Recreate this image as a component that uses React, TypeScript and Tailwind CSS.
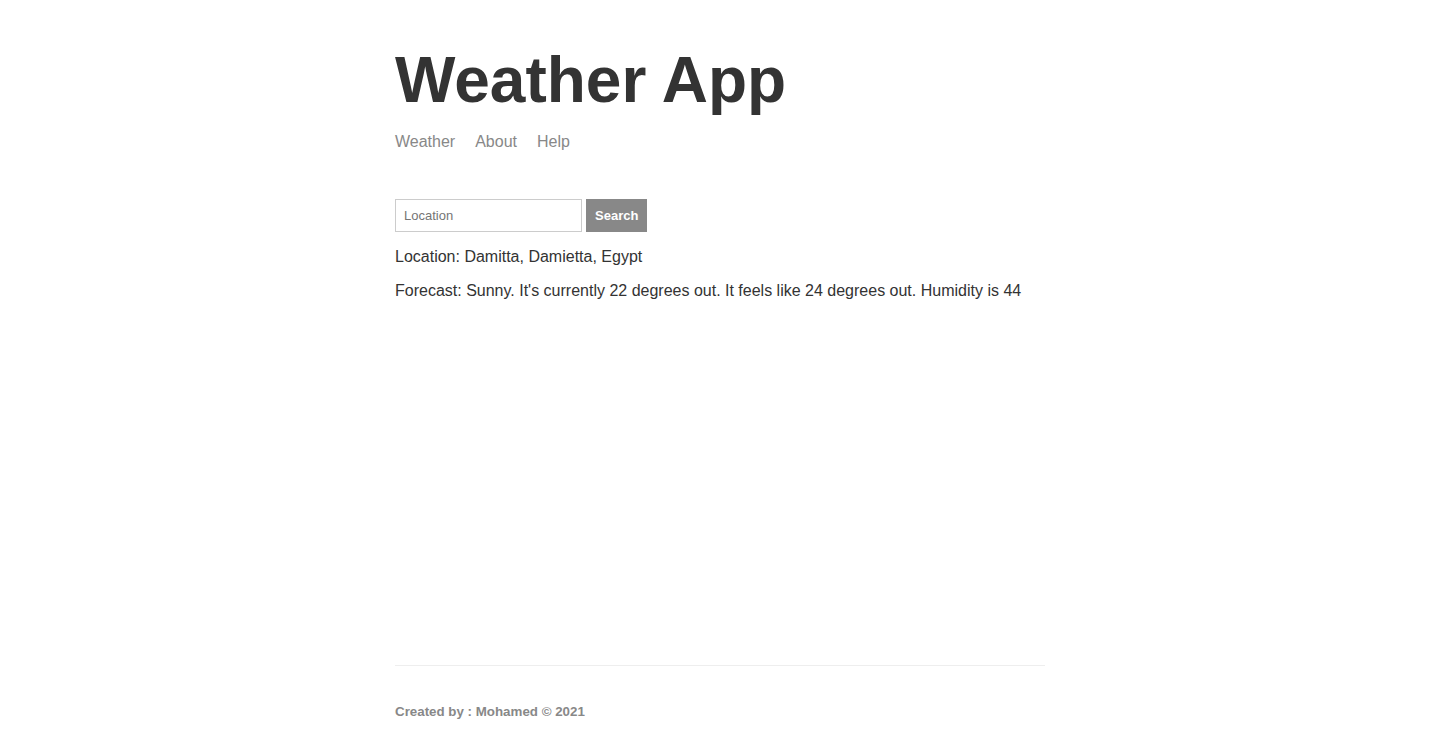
export default function App() {
  return (
    <div className="min-h-screen bg-white font-['Liberation_Sans',Arial,sans-serif] text-[#333]">
      <div className="mx-auto flex min-h-screen max-w-[650px] flex-col">
        <div className="flex-1">
          {/* Header */}
          <header className="pt-[43px] mb-12">
            <h1 className="text-[64px] font-bold leading-[74px] mb-4">Weather App</h1>
            <nav className="flex gap-5 text-base leading-[18px] text-[#888]">
              <a href="#">Weather</a>
              <a href="#">About</a>
              <a href="#">Help</a>
            </nav>
          </header>

          {/* Search */}
          <form className="flex gap-1" onSubmit={(e) => e.preventDefault()}>
            <input
              placeholder="Location"
              className="w-[187px] h-[33px] border border-[#ccc] px-2 text-[13px] text-[#333] placeholder:text-[#757575] outline-none"
            />
            <button className="h-[33px] bg-[#888] border border-[#888] px-2 text-[13px] font-bold text-white">Search</button>
          </form>

          <p className="mt-4 text-base leading-[18px]">Location: Damitta, Damietta, Egypt</p>
          <p className="mt-4 text-base leading-[18px]">
            Forecast: Sunny. It's currently 22 degrees out. It feels like 24 degrees out. Humidity is 44
          </p>
        </div>

        {/* Footer */}
        <footer className="h-[91px] border-t border-[#eee] pt-[38px]">
          <p className="text-[13.33px] font-bold leading-4 text-[#888]">Created by : Mohamed © 2021</p>
        </footer>
      </div>
    </div>
  );
}
